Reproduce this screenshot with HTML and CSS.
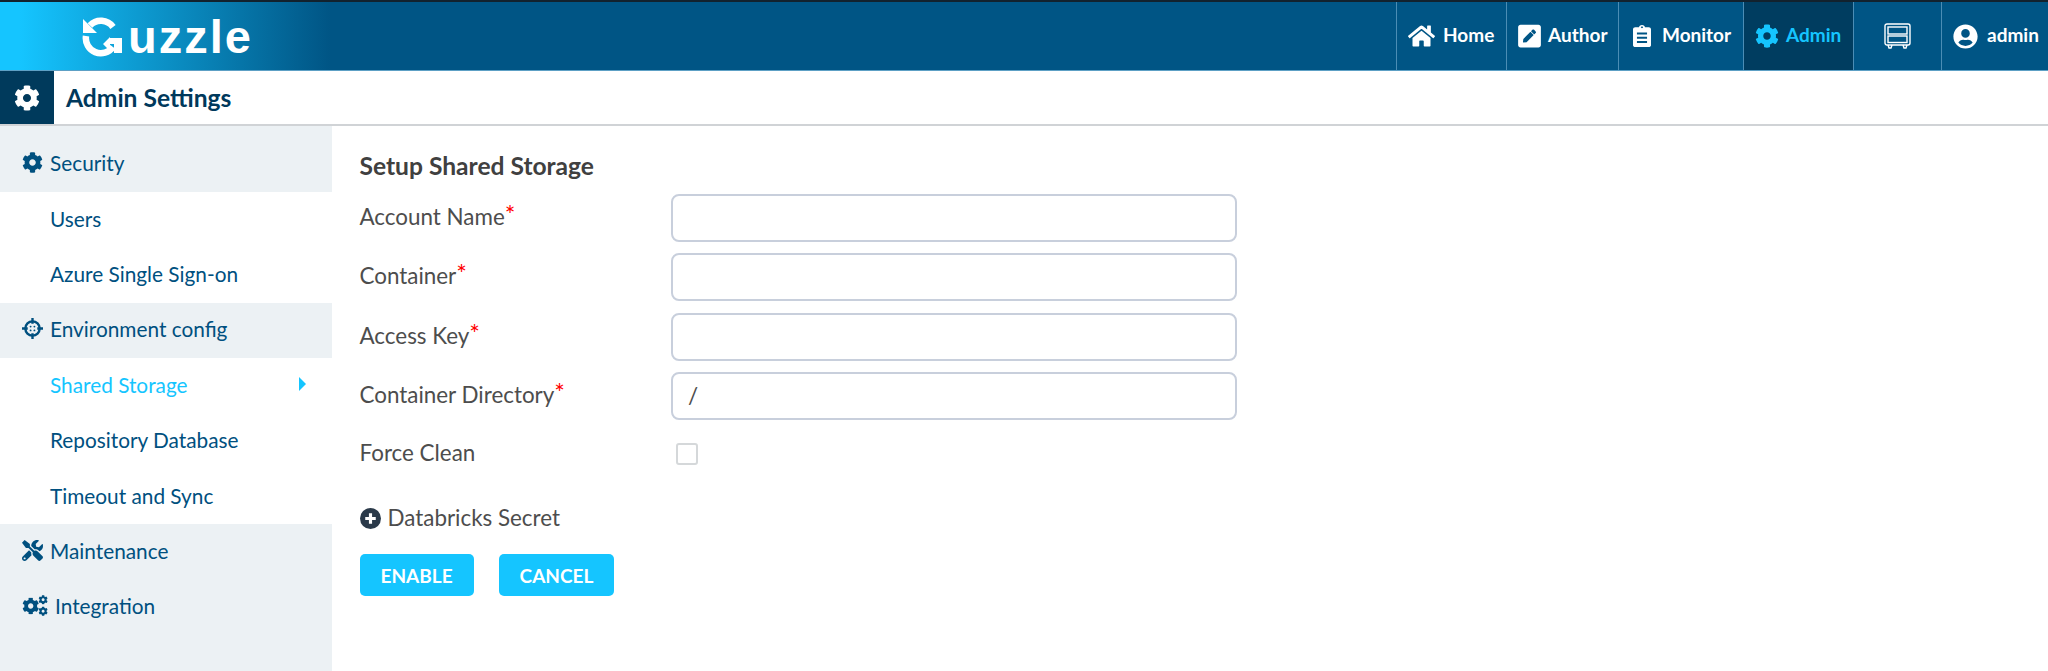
FILE: index.html
```html
<!DOCTYPE html>
<html lang="en">
<head>
  <meta charset="UTF-8" />
  <title>Admin Settings</title>
  <link rel="stylesheet" href="styles.css">
</head>
<body>

  <svg class="defs" width="0" height="0">
    <symbol id="cog" viewBox="0 0 512 512">
      <path d="M487.4 315.7l-42.6-24.6c4.3-23.2 4.3-47 0-70.2l42.6-24.6c4.9-2.8 7.1-8.6 5.5-14-11.1-35.6-30-67.8-54.7-94.6-3.8-4.1-10-5.1-14.8-2.3L380.8 110c-17.9-15.4-38.5-27.3-60.8-35.1V25.8c0-5.6-3.9-10.5-9.4-11.7-36.7-8.2-74.3-7.8-109.2 0-5.5 1.2-9.4 6.1-9.4 11.7V75c-22.2 7.9-42.8 19.8-60.8 35.1L88.7 85.5c-4.9-2.8-11-1.9-14.8 2.3-24.7 26.7-43.6 58.9-54.7 94.6-1.7 5.4.6 11.2 5.5 14L67.3 221c-4.3 23.2-4.3 47 0 70.2l-42.6 24.6c-4.9 2.8-7.1 8.6-5.5 14 11.1 35.6 30 67.8 54.7 94.6 3.8 4.1 10 5.1 14.8 2.3l42.6-24.6c17.9 15.4 38.5 27.3 60.8 35.1v49.2c0 5.6 3.9 10.5 9.4 11.7 36.7 8.2 74.3 7.8 109.2 0 5.5-1.2 9.4-6.1 9.4-11.7v-49.2c22.2-7.9 42.8-19.8 60.8-35.1l42.6 24.6c4.9 2.8 11 1.9 14.8-2.3 24.7-26.7 43.6-58.9 54.7-94.6 1.5-5.5-.7-11.3-5.6-14.1zM256 336c-44.1 0-80-35.9-80-80s35.9-80 80-80 80 35.9 80 80-35.9 80-80 80z"/>
    </symbol>
  </svg>

  <header class="topbar">
    <div class="logo">
      <svg class="logo-mark" viewBox="0 0 44 42" width="44" height="42">
        <path class="logo-arc" d="M8 10.500 A15 15 0 0 1 31 12"/>
        <path class="logo-arc" d="M4 21 A15 15 0 0 0 31 32"/>
        <path class="logo-arrow" d="M1 4 L15 18 L1 18 Z"/>
        <path class="logo-arrow" d="M21 29 L28 22 L28 23 L40 23 L40 38 L32 38 L32 29 L28 29 L28 36 Z"/>
      </svg>
      <span class="logo-text">uzzle</span>
    </div>
    <nav class="nav">
      <a class="nav-item nav-home">
        <svg class="ico" viewBox="0 0 576 512" width="27" height="24"><path d="M280.37 148.26L96 300.11V464a16 16 0 0 0 16 16l112.06-.29a16 16 0 0 0 15.92-16V368a16 16 0 0 1 16-16h64a16 16 0 0 1 16 16v95.64a16 16 0 0 0 16 16.05L464 480a16 16 0 0 0 16-16V300L295.67 148.26a12.19 12.19 0 0 0-15.3 0zM571.6 251.47L488 182.56V44.05a12 12 0 0 0-12-12h-56a12 12 0 0 0-12 12v72.61L318.47 43a48 48 0 0 0-61 0L4.34 251.47a12 12 0 0 0-1.6 16.9l25.5 31A12 12 0 0 0 45.15 301l235.22-193.74a12.19 12.19 0 0 1 15.3 0L530.9 301a12 12 0 0 0 16.9-1.6l25.5-31a12 12 0 0 0-1.7-16.93z"/></svg>
        <span class="nav-label">Home</span>
      </a>
      <a class="nav-item nav-author">
        <svg class="ico" viewBox="0 0 448 512" width="23" height="26"><path d="M400 480H48c-26.5 0-48-21.5-48-48V80c0-26.5 21.5-48 48-48h352c26.5 0 48 21.5 48 48v352c0 26.5-21.5 48-48 48zM238.1 177.9L102.4 313.6l-6.3 57.1c-.8 7.6 5.6 14.1 13.3 13.3l57.1-6.3L302.2 242c2.3-2.3 2.3-6.1 0-8.5L246.7 178c-2.5-2.4-6.3-2.4-8.6-.1zM345 165.1L314.9 135c-9.4-9.4-24.6-9.4-33.9 0l-23.1 23.1c-2.3 2.3-2.3 6.1 0 8.5l55.5 55.5c2.3 2.3 6.1 2.3 8.5 0L345 199c9.3-9.3 9.3-24.5 0-33.9z"/></svg>
        <span class="nav-label">Author</span>
      </a>
      <a class="nav-item nav-monitor">
        <svg class="ico" viewBox="0 0 384 470" width="18" height="22"><path fill-rule="evenodd" d="M336 50h-80c0-28-28.700-50-64-50s-64 22-64 50H48C21.500 50 0 68 0 90v340c0 22 21.500 40 48 40h288c26.500 0 48-18 48-40V90c0-22-21.500-40-48-40zM192 32c13.300 0 24 8 24 18s-10.700 18-24 18-24-8-24-18 10.700-18 24-18zM84 160h216v44H84zM84 250h216v44H84zM84 340h216v44H84z"/></svg>
        <span class="nav-label">Monitor</span>
      </a>
      <a class="nav-item nav-admin active">
        <svg class="ico" width="24" height="24"><use href="#cog"/></svg>
        <span class="nav-label">Admin</span>
      </a>
      <a class="nav-item nav-cabinet">
        <svg class="cabinet" viewBox="0 0 27 26" width="27" height="26">
          <rect x="1" y="1" width="25" height="21" rx="2"/>
          <rect x="4" y="4" width="19" height="7"/>
          <rect x="4" y="13" width="19" height="6.500"/>
          <path d="M13.500 7.500h.01M13.500 16h.01M4 22l1 3h2l1-3M19 22l1 3h2l1-3"/>
        </svg>
      </a>
      <a class="nav-item nav-user">
        <svg class="ico" viewBox="0 0 496 512" width="25" height="25"><path d="M248 8C111 8 0 119 0 256s111 248 248 248 248-111 248-248S385 8 248 8zm0 96c48.600 0 88 39.400 88 88s-39.400 88-88 88-88-39.400-88-88 39.400-88 88-88zm0 344c-58.700 0-111.300-26.600-146.500-68.200 18.800-35.400 55.600-59.800 98.500-59.800 2.400 0 4.800.4 7.100 1.100 13 4.200 26.600 6.900 40.900 6.900 14.300 0 28-2.700 40.900-6.900 2.300-.7 4.700-1.100 7.100-1.100 42.900 0 79.700 24.400 98.500 59.800C359.300 421.400 306.700 448 248 448z"/></svg>
        <span class="nav-label">admin</span>
      </a>
    </nav>
  </header>

  <div class="subbar">
    <div class="subbar-icon"><svg width="26" height="26"><use href="#cog"/></svg></div>
    <h1>Admin Settings</h1>
  </div>

  <div class="main">
    <aside class="sidebar">
      <div class="side-group">
        <svg class="side-ico" width="21" height="21"><use href="#cog"/></svg>
        Security
      </div>
      <a class="side-link">Users</a>
      <a class="side-link">Azure Single Sign-on</a>
      <div class="side-group">
        <svg class="side-ico crosshair" viewBox="0 0 22 22" width="21" height="21">
          <circle cx="11" cy="11" r="7.500"/>
          <path d="M11 0v6M11 16v6M0 11h6M16 11h6"/>
          <path class="dots" d="M9 9h.01M13 9h.01M9 13h.01M13 13h.01"/>
        </svg>
        Environment config
      </div>
      <a class="side-link current">Shared Storage<span class="caret"></span></a>
      <a class="side-link">Repository Database</a>
      <a class="side-link">Timeout and Sync</a>
      <div class="side-group">
        <svg class="side-ico" viewBox="0 0 512 512" width="21" height="21"><path d="M501.100 395.700L384 278.600c-23.100-23.100-57.600-27.600-85.400-13.900L192 158.100V96L64 0 0 64l96 128h62.100l106.600 106.600c-13.600 27.800-9.200 62.300 13.900 85.400l117.100 117.100c14.600 14.600 38.200 14.600 52.700 0l52.700-52.700c14.500-14.600 14.500-38.200 0-52.700zM331.700 225c28.300 0 54.900 11 74.900 31l19.400 19.400c15.800-6.900 30.800-16.500 43.800-29.500 37.100-37.100 49.700-89.300 37.900-136.700-2.200-9-13.500-12.100-20.100-5.500l-74.400 74.400-67.900-11.300L334 98.900l74.400-74.400c6.600-6.600 3.400-17.900-5.700-20.200-47.400-11.700-99.600.9-136.600 37.900-28.500 28.500-41.900 66.100-41.200 103.600l82.100 82.100c8.100-1.900 16.500-2.900 24.700-2.900zm-103.900 82l-56.700-56.700L18.700 402.800c-25 25-25 65.500 0 90.500s65.500 25 90.500 0l123.600-123.600c-7.600-19.900-9.900-41.600-5-62.700zM64 472c-13.200 0-24-10.800-24-24 0-13.300 10.700-24 24-24s24 10.700 24 24c0 13.200-10.700 24-24 24z"/></svg>
        Maintenance
      </div>
      <div class="side-group">
        <svg class="side-ico" viewBox="0 0 27 22" width="26" height="21">
          <use href="#cog" x="0" y="2.500" width="18" height="18"/>
          <use href="#cog" x="17" y="0" width="10" height="10"/>
          <use href="#cog" x="17" y="12" width="10" height="10"/>
        </svg>
        Integration
      </div>
    </aside>

    <main class="content">
      <h2>Setup Shared Storage</h2>
      <form class="form">
        <label class="field-label">Account Name<span class="req">*</span></label>
        <input class="field" type="text">
        <label class="field-label">Container<span class="req">*</span></label>
        <input class="field" type="text">
        <label class="field-label">Access Key<span class="req">*</span></label>
        <input class="field" type="text">
        <label class="field-label">Container Directory<span class="req">*</span></label>
        <input class="field" type="text" value="/">
        <label class="field-label force">Force Clean</label>
        <div class="check-cell"><input class="check" type="checkbox"></div>
      </form>
      <div class="secret">
        <svg viewBox="0 0 20 20" width="21" height="21"><circle cx="10" cy="10" r="10"/><path d="M10 5v10M5 10h10"/></svg>
        Databricks Secret
      </div>
      <div class="actions">
        <button class="btn" type="button">ENABLE</button>
        <button class="btn" type="button">CANCEL</button>
      </div>
    </main>
  </div>

</body>
</html>
```

FILE: styles.css
```css
html, body {
  margin: 0;
  height: 100%;
}
body {
  font-family: Lato, "Liberation Sans", sans-serif;
  font-size: 20.800px;
  color: #4d4d4d;
  background: white;
  display: flex;
  flex-direction: column;
  overflow: hidden;
}
.defs {
  position: absolute;
}
.topbar {
  height: 68px;
  flex: none;
  display: flex;
  justify-content: space-between;
  background: linear-gradient(90deg, #15c5ff 0, #15c5ff 20px, #005585 330px);
  border-top: 2px solid #12222e;
  border-bottom: 1px solid #5da0c5;
}
.logo {
  display: flex;
  align-items: center;
  padding-left: 82px;
  color: white;
}
.logo-mark {
  flex: none;
}
.logo-arc {
  fill: none;
  stroke: white;
  stroke-width: 6.500;
}
.logo-arrow {
  fill: white;
}
.logo-text {
  font-family: "Liberation Sans", sans-serif;
  font-size: 47px;
  font-weight: 700;
  letter-spacing: 2px;
  margin-left: 2px;
  line-height: 1;
}
.nav {
  display: flex;
}
.nav-item {
  display: flex;
  align-items: center;
  gap: 8px;
  box-sizing: border-box;
  color: white;
  font-size: 19px;
  font-weight: 700;
  border-left: 1px solid #4b8db5;
  padding-left: 11px;
}
.nav-label {
  padding-bottom: 3px;
}
.ico {
  fill: currentColor;
  flex: none;
}
.nav-home { width: 110px; }
.nav-author { width: 112px; gap: 7px; }
.nav-monitor { width: 125px; padding-left: 14px; gap: 11px; }
.nav-admin { width: 110px; gap: 7px; }
.nav-cabinet { width: 88px; padding-left: 30px; }
.nav-user { width: 107px; gap: 9px; }
.active {
  background: #003d60;
  color: #15c5ff;
}
.cabinet {
  fill: none;
  stroke: white;
  stroke-width: 1.400;
}
.subbar {
  height: 53px;
  flex: none;
  display: flex;
  align-items: center;
  border-bottom: 2px solid #d0d3d6;
}
.subbar-icon {
  width: 54px;
  height: 100%;
  background: #003a5c;
  color: white;
  display: flex;
  align-items: center;
  justify-content: center;
}
.subbar-icon svg {
  fill: currentColor;
}
.subbar h1 {
  margin: 0 0 0 12px;
  font-size: 24.600px;
  font-weight: 700;
  color: #00395c;
}
.main {
  flex: 1;
  display: flex;
  min-height: 0;
}
.sidebar {
  width: 332px;
  flex: none;
  box-sizing: border-box;
  padding-top: 10.600px;
  background: #ecf1f4;
  color: #00507f;
}
.side-group, .side-link {
  box-sizing: border-box;
  height: 55.400px;
  padding-bottom: 3px;
  display: flex;
  align-items: center;
}
.side-group {
  padding-left: 22px;
  gap: 7px;
}
.side-ico {
  fill: currentColor;
  flex: none;
}
.crosshair {
  fill: none;
  stroke: currentColor;
  stroke-width: 2.500;
}
.crosshair .dots {
  stroke-width: 2;
  stroke-linecap: round;
}
.side-link {
  background: white;
  padding-left: 50px;
  padding-right: 26px;
}
.current {
  color: #15c5ff;
  justify-content: space-between;
}
.caret {
  border-left: 7px solid #15c5ff;
  border-top: 7px solid transparent;
  border-bottom: 7px solid transparent;
}
.content {
  flex: 1;
  padding: 26px 0 0 27.500px;
  font-size: 22.400px;
}
.content h2 {
  margin: 0;
  font-size: 24.600px;
  font-weight: 700;
  color: #404040;
  line-height: 27px;
}
.form {
  display: grid;
  grid-template-columns: 311.500px 566px;
  grid-auto-rows: 48px;
  row-gap: 11.300px;
  margin-top: 15px;
  align-items: start;
}
.field-label {
  line-height: 24px;
  margin-top: 11px;
}
.force {
  margin-top: 10px;
}
.req {
  color: red;
  font-size: 25px;
  line-height: 0;
  position: relative;
  top: -1px;
}
.field {
  box-sizing: border-box;
  width: 566px;
  height: 48px;
  border: 2px solid #c8cfdc;
  border-radius: 8px;
  padding: 0 15px;
  font: 22.400px Lato, sans-serif;
  color: #4d4d4d;
  background: white;
  outline: none;
}
.check-cell {
  padding-top: 12px;
  padding-left: 5px;
}
.check {
  appearance: none;
  box-sizing: border-box;
  width: 22px;
  height: 22px;
  margin: 0;
  display: block;
  border: 2px solid #d5d8da;
  border-radius: 3px;
  background: white;
}
.secret {
  display: flex;
  align-items: center;
  gap: 7px;
  margin-top: 27px;
  line-height: 24px;
}
.secret svg {
  flex: none;
}
.secret circle {
  fill: #2b3a4a;
}
.secret path {
  stroke: white;
  stroke-width: 3;
}
.actions {
  display: flex;
  gap: 25px;
  margin-top: 24px;
}
.btn {
  height: 42px;
  border: none;
  border-radius: 5px;
  background: #15c5ff;
  color: white;
  font: 700 19px Lato, sans-serif;
  padding: 0 21px;
}
```
